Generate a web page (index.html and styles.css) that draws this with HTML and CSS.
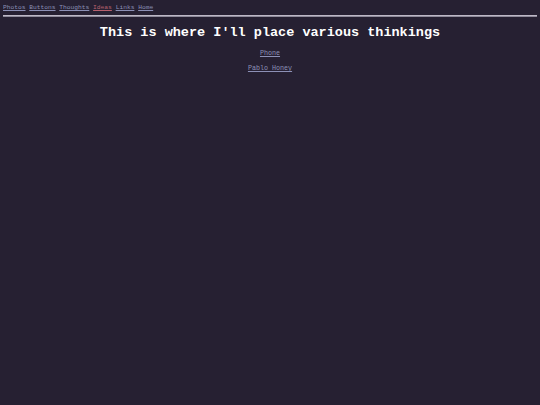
FILE: index.html
```html
<!DOCTYPE html>
<html>
<head>
<meta charset="utf-8">
<link rel="stylesheet" href="styles.css">
</head>
<body>
<nav class="nav">
<a href="#">Photos</a> <a href="#">Buttons</a> <a href="#">Thoughts</a> <a href="#" class="active">Ideas</a> <a href="#">Links</a> <a href="#">Home</a>
</nav>
<hr class="rule">
<main class="content">
<h1 class="title">This is where I'll place various thinkings</h1>
<p class="item"><a href="#">Phone</a></p>
<p class="item"><a href="#">Pablo Honey</a></p>
</main>
</body>
</html>
```
FILE: styles.css
```css
html, body {
  background: #262032;
}
body {
  margin: 3px;
  font-family: "Liberation Mono", "Courier New", monospace;
  color: #ffffff;
}
.nav {
  font-size: 6.25px;
  line-height: 8px;
  padding-top: 1px;
}
.nav a {
  color: #8c90b6;
}
.nav a.active {
  color: #b8606e;
}
.rule {
  margin: 3px 0 0 0;
  border: none;
  border-top: 1px solid #bdb8c6;
  border-bottom: 1px solid #8e8a9a;
  height: 0;
}
.content {
  text-align: center;
}
.title {
  font-size: 13.5px;
  font-weight: bold;
  margin: 8px 0 8px 0;
  line-height: 16px;
}
.item {
  font-size: 6.7px;
  margin: 0 0 7px 0;
  line-height: 8px;
}
.item a {
  color: #8c90b6;
}
```
